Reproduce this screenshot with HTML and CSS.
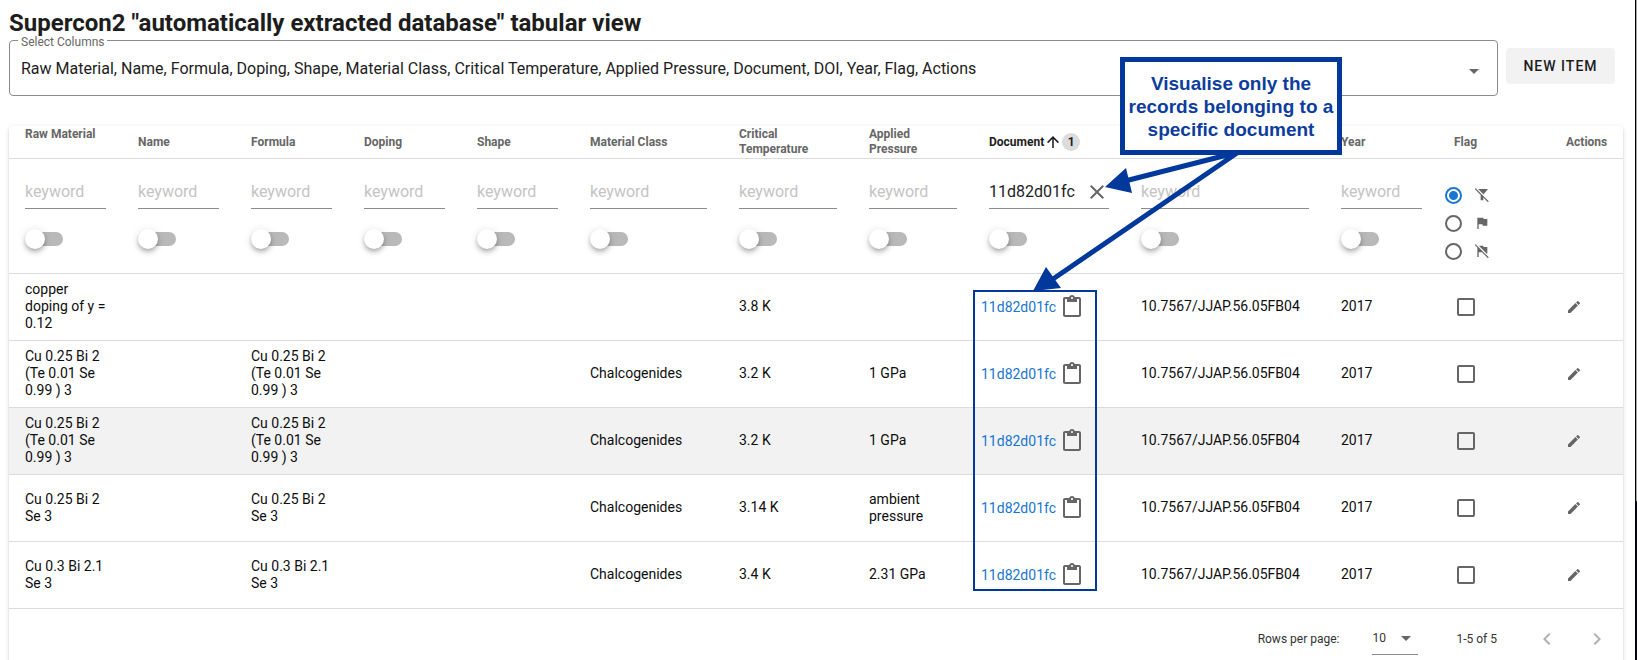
FILE: index.html
```html
<!DOCTYPE html>
<html lang="en">
<head>
<meta charset="utf-8">
<title>Supercon2 tabular view</title>
<link rel="stylesheet" href="styles.css">
</head>
<body>
<svg class="defs" aria-hidden="true">
  <symbol id="i-up" viewBox="0 0 24 24"><path d="M13,20H11V8L5.5,13.5L4.08,12.08L12,4.16L19.92,12.08L18.5,13.5L13,8V20Z"/></symbol>
  <symbol id="i-close" viewBox="0 0 24 24"><path d="M19,6.41L17.59,5L12,10.59L6.41,5L5,6.41L10.59,12L5,17.59L6.41,19L12,13.41L17.59,19L19,17.59L13.41,12L19,6.41Z"/></symbol>
  <symbol id="i-down" viewBox="0 0 24 24"><path d="M7,10L12,15L17,10H7Z"/></symbol>
  <symbol id="i-clip" viewBox="0 0 24 24"><path d="M19 2h-4.18C14.4.84 13.3 0 12 0c-1.3 0-2.4.84-2.82 2H5c-1.1 0-2 .9-2 2v16c0 1.1.9 2 2 2h14c1.1 0 2-.9 2-2V4c0-1.1-.9-2-2-2zm-7 0c.55 0 1 .45 1 1s-.45 1-1 1-1-.45-1-1 .45-1 1-1zm7 18H5V4h2v3h10V4h2v16z"/></symbol>
  <symbol id="i-pencil" viewBox="0 0 24 24"><path d="M20.71,7.04C21.1,6.65 21.1,6 20.71,5.63L18.37,3.29C18,2.9 17.35,2.9 16.96,3.29L15.12,5.12L18.87,8.87M3,17.25V21H6.75L17.81,9.93L14.06,6.18L3,17.25Z"/></symbol>
  <symbol id="i-nofilter" viewBox="0 0 24 24"><path d="M2.39,1.73L1.11,3L9.97,11.86V19.88L13.97,19.88V15.86L20.84,22.73L22.11,21.46L2.39,1.73M6.2,3H21L14,11.2V10.8L6.2,3Z"/></symbol>
  <symbol id="i-flag" viewBox="0 0 24 24"><path d="M14.4,6L14,4H5V21H7V14H12.6L13,16H20V6H14.4Z"/></symbol>
  <symbol id="i-noflag" viewBox="0 0 24 24"><path d="M2.39,1.73L1.11,3L5,6.89V21H7V14H12.11L20.84,22.73L22.11,21.46L2.39,1.73M7.2,4H14L14.4,6H20V16H19.2L7.2,4Z"/></symbol>
  <symbol id="i-left" viewBox="0 0 24 24"><path d="M15.41,16.58L10.83,12L15.41,7.41L14,6L8,12L14,18L15.41,16.58Z"/></symbol>
  <symbol id="i-right" viewBox="0 0 24 24"><path d="M8.59,16.58L13.17,12L8.59,7.41L10,6L16,12L10,18L8.59,16.58Z"/></symbol>
</svg>
<div class="page">
  <h1 class="title">Supercon2 "automatically extracted database" tabular view</h1>
  <div class="toolbar">
    <fieldset class="outlined">
      <legend class="legend"><label for="columns">Select Columns</label></legend>
      <select class="columns" id="columns"><option>Raw Material, Name, Formula, Doping, Shape, Material Class, Critical Temperature, Applied Pressure, Document, DOI, Year, Flag, Actions</option></select>
      <svg class="icon caret"><use href="#i-down"/></svg>
    </fieldset>
    <button class="new-item" type="button">NEW ITEM</button>
  </div>

  <div class="card">
    <table class="grid">
      <colgroup>
        <col class="w-s"><col class="w-s"><col class="w-s"><col class="w-s"><col class="w-s">
        <col class="w-class"><col class="w-temp"><col class="w-press"><col class="w-doc"><col class="w-doi"><col class="w-s"><col class="w-flag"><col class="w-act">
      </colgroup>
      <thead>
        <tr class="heads">
          <th>Raw Material <svg class="sort"><use href="#i-up"/></svg></th>
          <th>Name</th><th>Formula</th><th>Doping</th><th>Shape</th><th>Material Class</th>
          <th>Critical Temperature</th><th>Applied Pressure</th>
          <th class="sorted"><span class="sorted-in">Document<svg class="icon sort-on"><use href="#i-up"/></svg><span class="order">1</span></span></th>
          <th aria-label="DOI"></th><th>Year</th><th>Flag</th><th>Actions</th>
        </tr>
        <tr class="filters">
          <td><input class="kw" type="text" placeholder="keyword" aria-label="Raw Material filter"><input class="switch" type="checkbox" role="switch" aria-label="Raw Material switch"></td>
          <td><input class="kw" type="text" placeholder="keyword" aria-label="Name filter"><input class="switch" type="checkbox" role="switch" aria-label="Name switch"></td>
          <td><input class="kw" type="text" placeholder="keyword" aria-label="Formula filter"><input class="switch" type="checkbox" role="switch" aria-label="Formula switch"></td>
          <td><input class="kw" type="text" placeholder="keyword" aria-label="Doping filter"><input class="switch" type="checkbox" role="switch" aria-label="Doping switch"></td>
          <td><input class="kw" type="text" placeholder="keyword" aria-label="Shape filter"><input class="switch" type="checkbox" role="switch" aria-label="Shape switch"></td>
          <td><input class="kw" type="text" placeholder="keyword" aria-label="Material Class filter"><input class="switch" type="checkbox" role="switch" aria-label="Material Class switch"></td>
          <td><input class="kw" type="text" placeholder="keyword" aria-label="Critical Temperature filter"><input class="switch" type="checkbox" role="switch" aria-label="Critical Temperature switch"></td>
          <td><input class="kw" type="text" placeholder="keyword" aria-label="Applied Pressure filter"><input class="switch" type="checkbox" role="switch" aria-label="Applied Pressure switch"></td>
          <td><div class="kw-wrap"><input class="kw" type="text" value="11d82d01fc" aria-label="Document filter"><button class="plain" type="button" aria-label="Clear"><svg class="icon"><use href="#i-close"/></svg></button></div><input class="switch" type="checkbox" role="switch" aria-label="Document switch"></td>
          <td><input class="kw" type="text" placeholder="keyword" aria-label="DOI filter"><input class="switch" type="checkbox" role="switch" aria-label="DOI switch"></td>
          <td><input class="kw" type="text" placeholder="keyword" aria-label="Year filter"><input class="switch" type="checkbox" role="switch" aria-label="Year switch"></td>
          <td class="flag-filter"><div class="radios">
            <label class="radio"><input type="radio" name="flag" aria-label="All" checked><svg class="small"><use href="#i-nofilter"/></svg></label>
            <label class="radio"><input type="radio" name="flag" aria-label="Flagged"><svg class="small"><use href="#i-flag"/></svg></label>
            <label class="radio"><input type="radio" name="flag" aria-label="Not flagged"><svg class="small"><use href="#i-noflag"/></svg></label>
          </div></td>
          <td></td>
        </tr>
      </thead>
      <tbody>
        <tr>
          <td>copper doping of y = 0.12</td><td></td><td></td><td></td><td></td><td></td><td>3.8 K</td><td></td>
          <td class="doc"><div class="doc-in"><a href="#d1">11d82d01fc</a><button class="plain" type="button" aria-label="Copy"><svg class="icon"><use href="#i-clip"/></svg></button></div></td>
          <td>10.7567/JJAP.56.05FB04</td><td>2017</td>
          <td class="flag"><input class="box" type="checkbox" aria-label="Flag"></td>
          <td><button class="plain" type="button" aria-label="Edit"><svg class="small"><use href="#i-pencil"/></svg></button></td>
        </tr>
        <tr>
          <td>Cu 0.25 Bi 2 (Te 0.01 Se 0.99 ) 3</td><td></td><td>Cu 0.25 Bi 2 (Te 0.01 Se 0.99 ) 3</td><td></td><td></td><td>Chalcogenides</td><td>3.2 K</td><td>1 GPa</td>
          <td class="doc"><div class="doc-in"><a href="#d2">11d82d01fc</a><button class="plain" type="button" aria-label="Copy"><svg class="icon"><use href="#i-clip"/></svg></button></div></td>
          <td>10.7567/JJAP.56.05FB04</td><td>2017</td>
          <td class="flag"><input class="box" type="checkbox" aria-label="Flag"></td>
          <td><button class="plain" type="button" aria-label="Edit"><svg class="small"><use href="#i-pencil"/></svg></button></td>
        </tr>
        <tr class="hovered">
          <td>Cu 0.25 Bi 2 (Te 0.01 Se 0.99 ) 3</td><td></td><td>Cu 0.25 Bi 2 (Te 0.01 Se 0.99 ) 3</td><td></td><td></td><td>Chalcogenides</td><td>3.2 K</td><td>1 GPa</td>
          <td class="doc"><div class="doc-in"><a href="#d3">11d82d01fc</a><button class="plain" type="button" aria-label="Copy"><svg class="icon"><use href="#i-clip"/></svg></button></div></td>
          <td>10.7567/JJAP.56.05FB04</td><td>2017</td>
          <td class="flag"><input class="box" type="checkbox" aria-label="Flag"></td>
          <td><button class="plain" type="button" aria-label="Edit"><svg class="small"><use href="#i-pencil"/></svg></button></td>
        </tr>
        <tr>
          <td>Cu 0.25 Bi 2 Se 3</td><td></td><td>Cu 0.25 Bi 2 Se 3</td><td></td><td></td><td>Chalcogenides</td><td>3.14 K</td><td>ambient pressure</td>
          <td class="doc"><div class="doc-in"><a href="#d4">11d82d01fc</a><button class="plain" type="button" aria-label="Copy"><svg class="icon"><use href="#i-clip"/></svg></button></div></td>
          <td>10.7567/JJAP.56.05FB04</td><td>2017</td>
          <td class="flag"><input class="box" type="checkbox" aria-label="Flag"></td>
          <td><button class="plain" type="button" aria-label="Edit"><svg class="small"><use href="#i-pencil"/></svg></button></td>
        </tr>
        <tr>
          <td>Cu 0.3 Bi 2.1 Se 3</td><td></td><td>Cu 0.3 Bi 2.1 Se 3</td><td></td><td></td><td>Chalcogenides</td><td>3.4 K</td><td>2.31 GPa</td>
          <td class="doc"><div class="doc-in"><a href="#d5">11d82d01fc</a><button class="plain" type="button" aria-label="Copy"><svg class="icon"><use href="#i-clip"/></svg></button></div></td>
          <td>10.7567/JJAP.56.05FB04</td><td>2017</td>
          <td class="flag"><input class="box" type="checkbox" aria-label="Flag"></td>
          <td><button class="plain" type="button" aria-label="Edit"><svg class="small"><use href="#i-pencil"/></svg></button></td>
        </tr>
      </tbody>
    </table>
    <div class="footer">
      <label for="rows">Rows per page:</label>
      <div class="rows-wrap"><select class="rows" id="rows"><option>10</option></select><svg class="icon rows-caret"><use href="#i-down"/></svg></div>
      <span class="range">1-5 of 5</span>
      <button class="plain pager" type="button" aria-label="Previous page" disabled><svg class="icon"><use href="#i-left"/></svg></button>
      <button class="plain pager" type="button" aria-label="Next page" disabled><svg class="icon"><use href="#i-right"/></svg></button>
    </div>
  </div>
</div>

<div class="notes">
  <div class="outline"></div>
  <svg class="arrows" viewBox="0 0 400 260">
    <path d="M275 113L165 141M277 113L93 239" stroke-width="5"/>
    <path class="head" d="M145 147L166 128L172 153ZM73 251L86 227L101 248Z"/>
  </svg>
  <div class="callout">Visualise only the records belonging to a specific document</div>
</div>
</body>
</html>
```
FILE: styles.css
```css
* { box-sizing: border-box; }
html {
  overflow: hidden;
  background: linear-gradient(#a8a8a8 75%, #0a0a1c 75%);
}
body {
  margin: 0 1px 0 0;
  min-height: 100vh;
  background: #fff;
  color: #1d1d1d;
  font-family: Roboto, sans-serif;
  font-size: 14px;
  border-right: 1px solid #000;
  position: relative;
}
.defs { position: absolute; width: 0; height: 0; }
svg { fill: currentColor; }
.icon { width: 24px; height: 24px; display: block; }
.small { width: 16px; height: 16px; display: block; }
.plain { border: 0; background: none; padding: 0; color: #666; display: block; }

.page { padding: 7px 12px 0 9px; }
.title { margin: 0; font-size: 24px; line-height: 32px; font-weight: 700; }

.toolbar { display: flex; align-items: flex-start; gap: 8px; padding-right: 8px; }
.outlined {
  flex: 1;
  min-width: 0;
  height: 63px;
  margin: -6px 0 0;
  padding: 0 11px;
  border: 1px solid #8c8c8c;
  border-radius: 4px;
  position: relative;
}
.legend { padding: 3px 3px 0; margin-left: -3px; font-size: 12px; line-height: 12px; color: #666; }
.columns {
  appearance: none;
  display: block;
  width: 100%;
  height: 32px;
  margin-top: 5px;
  padding: 0;
  border: 0;
  background: none;
  color: #1d1d1d;
  font: 16px/32px Roboto, sans-serif;
}
.caret { position: absolute; right: 11px; top: 11px; color: #666; }
.new-item {
  min-width: 109px;
  height: 36px;
  margin-top: 9px;
  padding: 0 16px;
  border: 0;
  border-radius: 4px;
  background: #f2f2f2;
  color: #1d1d1d;
  font: 500 14px/36px Roboto, sans-serif;
  letter-spacing: 1px;
}

.card {
  margin-top: 30px;
  border-radius: 4px;
  box-shadow: 0 3px 1px -2px rgba(0,0,0,.2), 0 2px 2px 0 rgba(0,0,0,.14), 0 1px 5px 0 rgba(0,0,0,.12);
}
.grid { width: 100%; table-layout: fixed; border-collapse: separate; border-spacing: 0; }
.w-s { width: 113px; }
.w-class { width: 149px; }
.w-temp { width: 130px; }
.w-press { width: 120px; }
.w-doc { width: 152px; }
.w-doi { width: 200px; }
.w-flag { width: 112px; }
.w-act { width: 73px; }
.grid th, .grid td { padding: 0 16px; border-bottom: 1px solid #dcdcdc; text-align: left; }
.grid th { height: 33px; font-size: 12px; line-height: 15px; font-weight: 700; color: #666; }
.grid .sorted { color: #1d1d1d; }
.sort { width: 14px; height: 14px; opacity: 0; vertical-align: top; }
.sorted-in { display: flex; align-items: center; }
.sort-on { width: 18px; height: 18px; }
.order { width: 18px; height: 18px; border-radius: 9px; background: #dcdcdc; line-height: 18px; text-align: center; }

.grid .filters td { height: 115px; vertical-align: top; padding-top: 17px; }
.kw {
  display: block;
  width: 100%;
  height: 33px;
  padding: 0 0 2px;
  border: 0;
  border-bottom: 1px solid #8c8c8c;
  background: none;
  color: #1d1d1d;
  font: 16px/28px Roboto, sans-serif;
  outline: 0;
}
.kw::placeholder { color: #c4c4c4; opacity: 1; }
.kw-wrap { display: flex; align-items: center; border-bottom: 1px solid #8c8c8c; }
.kw-wrap .kw { min-width: 0; height: 32px; border: 0; }
.switch {
  appearance: none;
  display: block;
  position: relative;
  width: 36px;
  height: 14px;
  margin: 23px 0 0 2px;
  border-radius: 7px;
  background: #b9b9b9;
}
.switch::before {
  content: "";
  position: absolute;
  left: -2px;
  top: -3px;
  width: 20px;
  height: 20px;
  border-radius: 50%;
  background: #fff;
  box-shadow: 0 2px 4px -1px rgba(0,0,0,.2), 0 4px 5px 0 rgba(0,0,0,.14), 0 1px 10px 0 rgba(0,0,0,.12);
}
.grid .filters .flag-filter { padding: 28px 0 0 7px; }
.radios { display: flex; flex-direction: column; gap: 12px; }
.radio { display: flex; align-items: center; gap: 12px; height: 16px; color: #666; }
.radio input {
  appearance: none;
  width: 17px;
  height: 17px;
  margin: 0;
  border: 2px solid #666;
  border-radius: 50%;
}
.radio input:checked { border-color: #1976d2; background: radial-gradient(#1976d2 4px, transparent 5px); }

.grid tbody td { height: 67px; padding-bottom: 1px; line-height: 17px; color: #0d0d0d; }
.hovered td { background: #f2f2f2; }
.grid .doc { padding: 0 8px; }
.doc-in { display: flex; align-items: center; gap: 4px; }
.doc-in a { color: #1976d2; text-decoration: none; }
.grid .flag { padding-left: 19px; }
.box {
  appearance: none;
  display: block;
  width: 18px;
  height: 18px;
  margin: 0;
  border: 2px solid #666;
  border-radius: 2px;
}

.footer { display: flex; align-items: center; justify-content: flex-end; height: 59px; padding-right: 14px; font-size: 12px; color: #333; }
.rows-wrap { position: relative; margin: 0 38px 0 33px; }
.rows {
  appearance: none;
  display: block;
  width: 46px;
  height: 33px;
  border: 0;
  border-bottom: 1px solid #8c8c8c;
  border-radius: 0;
  background: none;
  padding: 0;
  color: #333;
  font: 12px/32px Roboto, sans-serif;
}
.rows-caret { position: absolute; right: 0; top: 4px; color: #666; }
.range { margin-right: 38px; }
.pager { color: #b0b0b0; }
.pager + .pager { margin-left: 26px; }

/* annotations drawn over the page */
.notes { position: absolute; left: 0; top: 0; pointer-events: none; }
.outline { position: absolute; left: 973px; top: 290px; width: 124px; height: 301px; border: 2px solid #00389c; }
.arrows { position: absolute; left: 960px; top: 40px; width: 400px; height: 260px; fill: none; stroke: #00389c; }
.arrows .head { fill: #00389c; stroke: none; }
.callout {
  position: absolute;
  left: 1120px;
  top: 57px;
  width: 222px;
  padding: 10px 0 9px;
  border: 5px solid #00389c;
  background: #fff;
  color: #0c3d9e;
  font: 700 19px/23px "Liberation Sans", Arial, sans-serif;
  text-align: center;
}
```
